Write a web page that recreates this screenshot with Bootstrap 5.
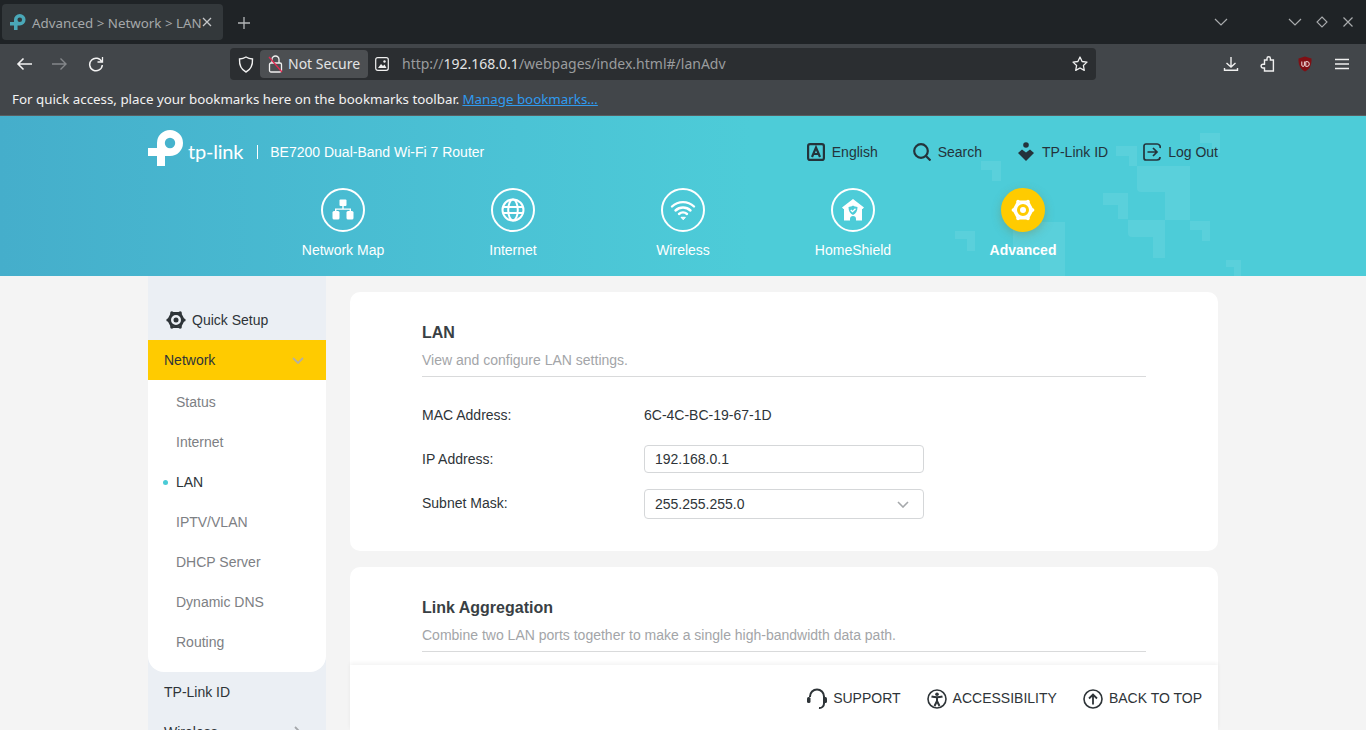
<!DOCTYPE html>
<html lang="en">
<head>
<meta charset="utf-8">
<title>Advanced > Network > LAN</title>
<link href="https://cdn.jsdelivr.net/npm/bootstrap@5.3.0/dist/css/bootstrap.min.css" rel="stylesheet">
<style>
html,body{height:730px;overflow:hidden}
body{font-family:"Liberation Sans",Arial,sans-serif;font-size:14px;background:#f4f4f4;color:#2e3438}
svg{display:block;flex:none}
.chrome{font-family:"Noto Sans",sans-serif}
.tabbar{height:44px;background:#1f2326;padding:4px 0 4px 2px;color:#b8babc}
.tabitem{width:221px;height:36px;background:#33383b;border-radius:4px;padding:0 11px 0 8px;font-size:13.33px;color:#a5a8aa;white-space:nowrap}
.tabname{margin-left:6px;flex:1;padding-top:3px}
.newtab{margin-left:14px;margin-top:2px}
.winbtns{margin-left:auto;padding-right:13px}
.toolrow{height:40px;background:#42464a;padding:0 6px 0 12px}
.navbtns{width:218px;gap:20px;padding-left:4px}
.urlbar{width:866px;height:32px;background:#2b2e31;border-radius:4px;padding:2px 8px;font-size:14px;color:#9a9c9e}
.notsecure{height:28px;width:108px;margin-left:6px;padding-left:8px;background:#4c4f52;border-radius:4px;color:#e3e4e5;gap:5px}
.notsecure span{margin-top:-2px}
.urltxt{margin-left:13px;flex:1;white-space:nowrap;margin-top:-2px}
.urltxt b{font-weight:400;color:#e3e4e5}
.tooltail{margin-left:auto;gap:0}
.toolslot{width:37px;justify-content:center}
.dlslot{margin-left:-1px}
.bookrow{height:32px;background:#42464a;border-bottom:1px solid #5a5d60;padding:1px 12px 0;font-size:13.33px;color:#f2f2f2;white-space:nowrap}
.bookrow a{color:#2f9bf0;margin-left:3px}
.hero{height:160px;background:linear-gradient(90deg,#45aecb 0%,#4bc3d5 38%,#4dccd8 55%,#4dccd8 100%);overflow:hidden}
.heroart{position:absolute;left:0;top:0;pointer-events:none}
.heroin{width:1070px;position:relative}
.herotop{height:72px}
.logomark{margin-top:-8px}
.logoword{font-family:Lato,sans-serif;font-size:20px;line-height:24px;color:#fff;margin-left:4px;letter-spacing:-.2px;margin-top:-3px}
.prodname{color:#fff;margin-left:14px;padding-left:12px;border-left:1px solid #fff;line-height:14px}
.usermenu{color:#24333b;margin-left:auto}
.usermenu>div{margin-left:35px}
.usermenu>div.widegap{margin-left:36px}
.usermenu span{margin-left:7px}
.mainnav{height:88px}
.navcell{width:170px;color:#fff}
.navring{width:44px;height:44px;border:2px solid #fff;border-radius:50%;margin-bottom:8px}
.navring.sel{background:#ffcb00;border-color:#ffcb00;box-shadow:0 3px 10px rgba(120,120,60,.35)}
.navcell b{font-weight:700}
.pagewrap{height:454px;overflow:hidden;position:relative}
.pagein{width:1070px;position:relative;height:454px}
.sidenav{width:178px;background:#ebeff4;flex:none;height:480px}
.quickrow{height:64px;padding:24px 0 0 18px;gap:6px;color:#2e3438}
.sideact{height:40px;background:#ffcb00;padding:0 22px 0 16px;color:#2e3438}
.subwrap{background:#fff;border-radius:0 0 16px 16px;padding:2px 0 10px}
.subitem{height:40px;padding-left:28px;color:#7d8084;position:relative}
.subitem.on{color:#2e3438}
.subitem.on::before{content:"";position:absolute;left:15px;top:18px;width:5px;height:5px;border-radius:50%;background:#4acbd6}
.sideitem{height:40px;padding:0 25px 0 16px;color:#2e3438}
.maincol{width:868px;margin-left:24px;padding-top:16px}
.panelbox{background:#fff;border-radius:10px;padding:30px 72px 0;margin-bottom:16px}
.panelbox.first{height:259px}
.panelbox.second{height:200px}
.paneltitle{font-size:16px;font-weight:700;line-height:22px;margin:0;color:#393f44}
.panelsub{color:#a3a5a8;line-height:20px;margin-top:6px;padding-bottom:6px;border-bottom:1px solid #d9dadb;height:27px}
.fieldrow{height:44px}
.fieldlab{width:222px}
.fieldbox{width:280px;height:28px;border:1px solid #d5d7d9;border-radius:4px;padding:0 10px;background:#fff;color:#2e3438}
.fieldbox.tall{height:30px;padding-right:14px;margin-top:2px}
.footbar{position:absolute;right:0;bottom:0;width:868px;height:65px;background:#fff;box-shadow:0 -2px 4px rgba(0,0,0,.05);padding:2px 16px 0 0;gap:26px;text-transform:uppercase;color:#2e3438}
.footitem{gap:6px}
</style>
</head>
<body>
<div class="chrome">
  <div class="tabbar d-flex align-items-center">
    <div class="tabitem d-flex align-items-center">
      <svg width="16" height="16" viewBox="0 0 36 36"><path d="M0 18h9v-5a13 13 0 1 1 13 13h-5v10H9V26H0z" fill="#4aa8b8"/><circle cx="22" cy="13" r="5.200" fill="#33383b"/></svg>
      <span class="tabname">Advanced &gt; Network &gt; LAN</span>
      <svg width="10" height="10" viewBox="0 0 10 10" stroke="#c5c7c9" stroke-width="1.300"><path d="M1 1l8 8M9 1l-8 8"/></svg>
    </div>
    <svg class="newtab" width="14" height="14" viewBox="0 0 14 14" stroke="#b4b6b8" stroke-width="1.300"><path d="M7 1v12M1 7h12"/></svg>
    <div class="winbtns d-flex align-items-center">
      <svg width="14" height="8" viewBox="0 0 14 8" fill="none" stroke="#a9abad" stroke-width="1.200"><path d="M1 1l6 6 6-6"/></svg>
      <svg style="margin-left:60px" width="14" height="8" viewBox="0 0 14 8" fill="none" stroke="#a9abad" stroke-width="1.200"><path d="M1 1l6 6 6-6"/></svg>
      <svg style="margin-left:14px" width="12" height="12" viewBox="0 0 12 12" fill="none" stroke="#a9abad" stroke-width="1.100"><path d="M6 1l5 5-5 5-5-5z"/></svg>
      <svg style="margin-left:15px" width="10" height="10" viewBox="0 0 10 10" fill="none" stroke="#a9abad" stroke-width="1.200"><path d="M.5.5l9 9M9.500.5l-9 9"/></svg>
    </div>
  </div>
  <div class="toolrow d-flex align-items-center">
    <div class="navbtns d-flex align-items-center">
      <svg width="16" height="14" viewBox="0 0 16 14" fill="none" stroke="#f2f2f2" stroke-width="1.600"><path d="M16 7H2M7.500 1.500L2 7l5.500 5.500"/></svg>
      <svg width="16" height="14" viewBox="0 0 16 14" fill="none" stroke="#84878a" stroke-width="1.400"><path d="M0 7h14M8.500 1.500L14 7l-5.500 5.500"/></svg>
      <svg width="16" height="16" viewBox="0 0 16 16" fill="none" stroke="#f2f2f2" stroke-width="1.500"><path d="M13.800 6A6.300 6.300 0 1 0 14.300 9"/><path d="M14.500 1v5h-5" stroke-width="1.300"/></svg>
    </div>
    <div class="urlbar d-flex align-items-center">
      <svg width="16" height="17" viewBox="0 0 16 17" fill="none" stroke="#f0f0f0" stroke-width="1.400"><path d="M8 1c2 1.200 4 1.800 6.500 2 .3 6-1.500 10.500-6.500 13C3 13.500 1.200 9 1.500 3 4 2.800 6 2.200 8 1z"/></svg>
      <div class="notsecure d-flex align-items-center">
        <svg width="15" height="18" viewBox="0 0 15 18" fill="none"><rect x="1.500" y="8" width="12" height="9" rx="1.500" stroke="#f0f0f0" stroke-width="1.300"/><path d="M4 8V4.500a3.500 3.500 0 0 1 7 0V8" stroke="#f0f0f0" stroke-width="1.300"/><path d="M1 2l13 15" stroke="#e22850" stroke-width="1.300"/></svg>
        <span>Not Secure</span>
      </div>
      <svg style="margin-left:7px" width="14" height="14" viewBox="0 0 14 14"><rect x=".7" y=".7" width="12.600" height="12.600" rx="2" fill="none" stroke="#f0f0f0" stroke-width="1.200"/><path d="M3 11l3-4 2 2 1.500-1.500L11.500 11z" fill="#f0f0f0"/><circle cx="9.500" cy="4.500" r="1.200" fill="#f0f0f0"/></svg>
      <div class="urltxt">http://<b>192.168.0.1</b>/webpages/index.html#/lanAdv</div>
      <svg width="16" height="16" viewBox="0 0 16 16" fill="none" stroke="#f0f0f0" stroke-width="1.300" stroke-linejoin="round"><path d="M8 1l2.100 4.500 4.900.6-3.600 3.400.9 4.900L8 12l-4.300 2.400.9-4.900L1 6.100l4.900-.6z"/></svg>
    </div>
    <div class="tooltail d-flex align-items-center">
      <div class="toolslot dlslot d-flex"><svg width="16" height="16" viewBox="0 0 16 16" fill="none" stroke="#f0f0f0" stroke-width="1.400"><path d="M8 1v10M3.500 7L8 11l4.500-4M1.500 12v2.300h13V12"/></svg></div>
      <div class="toolslot d-flex"><svg width="16" height="16" viewBox="0 0 16 16" fill="none" stroke="#f0f0f0" stroke-width="1.400"><path d="M6 4h2V2.500a1.700 1.700 0 0 1 3.400 0V4h3v11H5.500v-3H4a1.900 1.900 0 0 1 0-3.800h1.500V4z" transform="translate(-1 0)"/></svg></div>
      <div class="toolslot d-flex"><svg width="16" height="16" viewBox="0 0 16 16"><path d="M8 .5l6.500 2c.2 6.500-1.500 10.500-6.500 13C3 13 1.300 9 1.500 2.500z" fill="#800f14"/><path d="M4.800 5.500v3.600a1.300 1.300 0 0 0 2.600 0V5.500M8.800 5.500v5h1a2.500 2.500 0 0 0 0-5z" fill="none" stroke="#f2dcdc" stroke-width="1"/></svg></div>
      <div class="toolslot d-flex"><svg width="14" height="12" viewBox="0 0 14 12" stroke="#f0f0f0" stroke-width="1.400"><path d="M0 1.500h14M0 6h14M0 10.500h14"/></svg></div>
    </div>
  </div>
  <div class="bookrow d-flex align-items-center">For quick access, place your bookmarks here on the bookmarks toolbar. <a href="#">Manage bookmarks…</a></div>
</div>

<header class="hero position-relative">
  <svg class="heroart" width="1366" height="160" viewBox="0 116 1366 160" fill="#fff" fill-opacity=".08">
    <path d="M981 161h20v20h-9v-11h-11z"/>
    <path d="M1116 146h21v20h-8v-10h-13z"/>
    <path d="M1200 133h20v20h-8v-10h-12z"/>
    <path d="M1137 166h53v54h-25v-28h-24a4 4 0 0 1-4-4z"/>
    <path d="M1103 193h25v26h-10v-14h-15z"/>
    <path d="M1128 220h37v38h-12v-21h-21a4 4 0 0 1-4-4z"/>
    <path d="M1190 221h20v20h-8v-11h-12z"/>
    <path d="M1226 260h15v16h-7v-9h-8z"/>
    <path d="M955 231h20v20h-8v-12h-12z"/>
    <path d="M1013 222h52v54h-25v-26h-27z"/>
  </svg>
  <div class="heroin mx-auto">
    <div class="herotop d-flex align-items-center">
      <svg class="logomark" width="36" height="36" viewBox="0 0 36 36" fill="#fff"><path d="M0 18h9v-5a13 13 0 1 1 13 13h-5v10H9V26H0z"/><circle cx="22" cy="13" r="5.200" fill="#46b3cd"/></svg>
      <span class="logoword">tp-link</span>
      <span class="prodname">BE7200 Dual-Band Wi-Fi 7 Router</span>
      <div class="usermenu d-flex align-items-center">
        <div class="d-flex align-items-center"><svg width="18" height="18" viewBox="0 0 18 18" fill="none"><rect x="1.100" y="1.100" width="15.800" height="15.800" rx="2" stroke="#24333b" stroke-width="2.200"/><path d="M5 14L9 4.500l4 9.500M6.300 11h5.400" stroke="#24333b" stroke-width="2.200"/></svg><span>English</span></div>
        <div class="d-flex align-items-center"><svg width="18" height="18" viewBox="0 0 18 18" fill="none" stroke="#24333b" stroke-width="2.200"><circle cx="8" cy="8" r="6.800"/><path d="M13 13l4.500 4.500"/></svg><span>Search</span></div>
        <div class="widegap d-flex align-items-center"><svg width="16" height="20" viewBox="0 0 16 20" fill="#24333b"><circle cx="8" cy="3" r="2.800"/><path d="M0 11l4-3.500 4 3 4-3 4 3.500-8 8z"/></svg><span style="margin-left:8px">TP-Link ID</span></div>
        <div class="d-flex align-items-center"><svg width="18" height="18" viewBox="0 0 18 18" fill="none" stroke="#24333b" stroke-width="1.700"><path d="M14 1H3a2 2 0 0 0-2 2v12a2 2 0 0 0 2 2h11a3 3 0 0 0 3-3M17 5a3 3 0 0 0-3-4"/><path d="M4.500 9H14M10 5l4 4-4 4"/></svg><span>Log Out</span></div>
      </div>
    </div>
    <nav class="mainnav d-flex justify-content-center">
      <div class="navcell d-flex flex-column align-items-center"><div class="navring d-flex align-items-center justify-content-center"><svg width="24" height="24" viewBox="0 0 24 24" fill="#fff"><rect x="8.500" y="1.500" width="7" height="6.500" rx="1"/><rect x="1.500" y="13" width="7" height="8.500" rx="1.500"/><rect x="15.500" y="13" width="7" height="8.500" rx="1.500"/><path d="M11.300 8h1.400v2.500H20V13h-1.400v-1.200H5.400V13H4v-2.500h7.300z"/></svg></div><span>Network Map</span></div>
      <div class="navcell d-flex flex-column align-items-center"><div class="navring d-flex align-items-center justify-content-center"><svg width="24" height="24" viewBox="0 0 24 24" fill="none" stroke="#fff" stroke-width="2"><circle cx="12" cy="12" r="10.500"/><ellipse cx="12" cy="12" rx="4.800" ry="10.500"/><path d="M2 9h20M2 15h20"/></svg></div><span>Internet</span></div>
      <div class="navcell d-flex flex-column align-items-center"><div class="navring d-flex align-items-center justify-content-center"><svg width="26" height="22" viewBox="0 0 26 22" fill="none" stroke="#fff" stroke-width="2.400" stroke-linecap="round"><path d="M2 7.500a16 16 0 0 1 22 0M5.500 11.500a11 11 0 0 1 15 0M9 15a6 6 0 0 1 8 0"/><path d="M13 20.500l-2-2.200h4z" fill="#fff" stroke-width="1"/></svg></div><span>Wireless</span></div>
      <div class="navcell d-flex flex-column align-items-center"><div class="navring d-flex align-items-center justify-content-center"><svg width="24" height="24" viewBox="0 0 24 24"><path d="M12 1l11 8.500-1.500 1.500H21v11.500h-6v-1.500a3 3 0 0 0-6 0v1.500H3V11h-.5L1 9.500z" fill="#fff"/><path d="M12 7.500c1.500 1 3 1.300 4.500 1.500 0 4-1.500 6.500-4.500 8-3-1.500-4.500-4-4.500-8 1.500-.2 3-.5 4.500-1.500z" fill="#4dccd8"/><path d="M9.800 12l1.700 1.700 3-3" fill="none" stroke="#fff" stroke-width="1.300"/></svg></div><span>HomeShield</span></div>
      <div class="navcell d-flex flex-column align-items-center"><div class="navring sel d-flex align-items-center justify-content-center"><svg width="24" height="24" viewBox="0 0 24 24" fill="#fff"><path d="M7 3.500h10L21.500 12 17 20.500H7L2.500 12z" fill="none" stroke="#fff" stroke-width="2"/><circle cx="12" cy="12" r="7.300" fill="none" stroke="#fff" stroke-width="2.600"/><circle cx="12" cy="12" r="3"/><circle cx="7" cy="3.500" r="1.700"/><circle cx="17" cy="3.500" r="1.700"/><circle cx="2.300" cy="12" r="1.700"/><circle cx="21.700" cy="12" r="1.700"/><circle cx="7" cy="20.500" r="1.700"/><circle cx="17" cy="20.500" r="1.700"/></svg></div><b>Advanced</b></div>
    </nav>
  </div>
</header>

<div class="pagewrap">
  <div class="pagein mx-auto d-flex">
    <aside class="sidenav">
      <div class="quickrow d-flex align-items-center">
        <svg width="20" height="20" viewBox="0 0 24 24" fill="#2e3438"><path d="M7 3.500h10L21.500 12 17 20.500H7L2.500 12z" fill="none" stroke="#2e3438" stroke-width="2"/><circle cx="12" cy="12" r="7.300" fill="none" stroke="#2e3438" stroke-width="2.600"/><circle cx="12" cy="12" r="3"/><circle cx="7" cy="3.500" r="2"/><circle cx="17" cy="3.500" r="2"/><circle cx="2.300" cy="12" r="1.900"/><circle cx="21.700" cy="12" r="1.900"/><circle cx="7" cy="20.500" r="2"/><circle cx="17" cy="20.500" r="2"/></svg>
        <span>Quick Setup</span>
      </div>
      <div class="sideact d-flex align-items-center justify-content-between"><span>Network</span><svg width="12" height="7" viewBox="0 0 12 7" fill="none" stroke="#b5b0a0" stroke-width="1.800"><path d="M1 1l5 5 5-5"/></svg></div>
      <div class="subwrap">
        <div class="subitem d-flex align-items-center">Status</div>
        <div class="subitem d-flex align-items-center">Internet</div>
        <div class="subitem on d-flex align-items-center">LAN</div>
        <div class="subitem d-flex align-items-center">IPTV/VLAN</div>
        <div class="subitem d-flex align-items-center">DHCP Server</div>
        <div class="subitem d-flex align-items-center">Dynamic DNS</div>
        <div class="subitem d-flex align-items-center">Routing</div>
      </div>
      <div class="sideitem d-flex align-items-center">TP-Link ID</div>
      <div class="sideitem d-flex align-items-center justify-content-between"><span>Wireless</span><svg width="7" height="12" viewBox="0 0 7 12" fill="none" stroke="#a5a8ab" stroke-width="1.800"><path d="M1 1l5 5-5 5"/></svg></div>
    </aside>
    <main class="maincol">
      <section class="panelbox first">
        <h2 class="paneltitle">LAN</h2>
        <div class="panelsub">View and configure LAN settings.</div>
        <div class="pt-3">
          <div class="fieldrow d-flex align-items-center"><div class="fieldlab">MAC Address:</div><div>6C-4C-BC-19-67-1D</div></div>
          <div class="fieldrow d-flex align-items-center"><div class="fieldlab">IP Address:</div><div class="fieldbox d-flex align-items-center">192.168.0.1</div></div>
          <div class="fieldrow d-flex align-items-center"><div class="fieldlab">Subnet Mask:</div><div class="fieldbox tall d-flex align-items-center justify-content-between"><span>255.255.255.0</span><svg width="12" height="7" viewBox="0 0 12 7" fill="none" stroke="#a5a8ab" stroke-width="1.600"><path d="M1 1l5 5 5-5"/></svg></div></div>
        </div>
      </section>
      <section class="panelbox second">
        <h2 class="paneltitle">Link Aggregation</h2>
        <div class="panelsub">Combine two LAN ports together to make a single high-bandwidth data path.</div>
      </section>
    </main>
    <div class="footbar d-flex align-items-center justify-content-end">
      <div class="footitem d-flex align-items-center"><svg width="20" height="22" viewBox="0 0 20 22" fill="none" stroke="#2e3438" stroke-width="2"><path d="M3 9V8.500a7 7 0 0 1 14 0v7a4.500 4.500 0 0 1-5 4.500"/><rect x="0" y="9" width="3.500" height="6" rx="1.500" fill="#2e3438" stroke="none"/><rect x="16.500" y="9" width="3.500" height="6" rx="1.500" fill="#2e3438" stroke="none"/></svg><span>Support</span></div>
      <div class="footitem d-flex align-items-center"><svg width="20" height="20" viewBox="0 0 20 20" fill="none" stroke="#2e3438" stroke-width="1.600"><circle cx="10" cy="10" r="9"/><circle cx="10" cy="5.300" r="1.800" fill="#2e3438" stroke="none"/><path d="M4.500 7.500c3.500 1 7.500 1 11 0M10 8.500v3.500M10 12l-2.500 5M10 12l2.500 5" stroke-width="2"/></svg><span>Accessibility</span></div>
      <div class="footitem d-flex align-items-center"><svg width="20" height="20" viewBox="0 0 20 20" fill="none" stroke="#2e3438" stroke-width="1.600"><circle cx="10" cy="10" r="9"/><path d="M10 15.500V5.500M6 9.500l4-4 4 4" stroke-width="1.800"/></svg><span>Back to top</span></div>
    </div>
  </div>
</div>
<script src="https://cdn.jsdelivr.net/npm/bootstrap@5.3.0/dist/js/bootstrap.bundle.min.js"></script>
</body>
</html>
